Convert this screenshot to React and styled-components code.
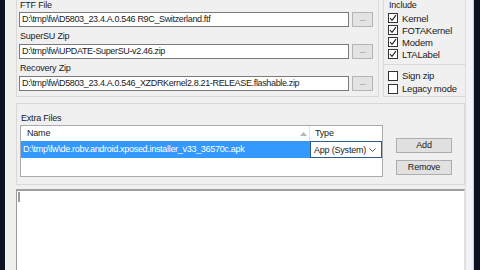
import React from 'react';
import styled, { createGlobalStyle } from 'styled-components';

const GlobalStyle = createGlobalStyle`
    html, body {
        margin: 0;
        padding: 0;
        background: #0b1322;
    }
    * {
        box-sizing: border-box;
    }
`;

const checks = [
    { label: 'Kernel', on: true },
    { label: 'FOTAKernel', on: true },
    { label: 'Modem', on: true },
    { label: 'LTALabel', on: true },
];

const options = [
    { label: 'Sign zip', on: false },
    { label: 'Legacy mode', on: false },
];

const fields = [
    { label: 'FTF File', value: 'D:\\tmp\\fw\\D5803_23.4.A.0.546 R9C_Switzerland.ftf' },
    { label: 'SuperSU Zip', value: 'D:\\tmp\\fw\\UPDATE-SuperSU-v2.46.zip' },
    { label: 'Recovery Zip', value: 'D:\\tmp\\fw\\D5803_23.4.A.0.546_XZDRKernel2.8.21-RELEASE.flashable.zip' },
];

const CheckBox = ({ on }) => (
    <Box>
        {on && (
            <svg width="8" height="8" viewBox="0 0 8 8">
                <path d="M1 4 L3 6.3 L7 1.2" fill="none" stroke="#1a1a1a" strokeWidth="1.1" />
            </svg>
        )}
    </Box>
);

const App = () => {
    return (
        <Screen>
            <GlobalStyle />
            <Window>
                <Content>
                    <TopRow>
                        <FileGroup>
                            {fields.map((f, i) => (
                                <React.Fragment key={f.label}>
                                    <Label $first={i === 0}>{f.label}</Label>
                                    <FieldRow>
                                        <TextBox>{f.value}</TextBox>
                                        <BrowseButton>...</BrowseButton>
                                    </FieldRow>
                                </React.Fragment>
                            ))}
                        </FileGroup>
                        <IncludeGroup>
                            <CheckList>
                                <Label $first>Include</Label>
                                {checks.map(c => (
                                    <CheckRow key={c.label}>
                                        <CheckBox on={c.on} />
                                        {c.label}
                                    </CheckRow>
                                ))}
                            </CheckList>
                            <CheckList $divided>
                                {options.map(c => (
                                    <CheckRow key={c.label} $tall>
                                        <CheckBox on={c.on} />
                                        {c.label}
                                    </CheckRow>
                                ))}
                            </CheckList>
                        </IncludeGroup>
                    </TopRow>

                    <ExtraGroup>
                        <ListColumn>
                            <ExtraLabel>Extra Files</ExtraLabel>
                            <ListView>
                                <HeaderRow>
                                    <HeaderCell $name>
                                        Name
                                        <svg width="7" height="4" viewBox="0 0 7 4">
                                            <path d="M0 4 L3.5 0 L7 4 Z" fill="#b4b4b4" />
                                        </svg>
                                    </HeaderCell>
                                    <HeaderCell>Type</HeaderCell>
                                </HeaderRow>
                                <ItemRow>
                                    <NameCell>D:\tmp\fw\de.robv.android.xposed.installer_v33_36570c.apk</NameCell>
                                    <ComboCell>
                                        App (System)
                                        <svg width="7" height="4" viewBox="0 0 7 4">
                                            <path d="M0.5 0.5 L3.5 3.5 L6.5 0.5" fill="none" stroke="#444" strokeWidth="0.9" />
                                        </svg>
                                    </ComboCell>
                                </ItemRow>
                            </ListView>
                        </ListColumn>
                        <ButtonColumn>
                            <ActionButton>Add</ActionButton>
                            <ActionButton>Remove</ActionButton>
                        </ButtonColumn>
                    </ExtraGroup>

                    <LogArea>
                        <Caret />
                    </LogArea>
                </Content>
                <Edge />
            </Window>
        </Screen>
    );
};

const Screen = styled.div`
    width: 480px;
    height: 270px;
    display: flex;
    overflow: hidden;
    background: #0b1322;
    font-family: "Liberation Sans", Arial, sans-serif;
    font-size: 9px;
    letter-spacing: -0.2px;
    color: #1a1a1a;
`;

const Window = styled.div`
    margin-left: 5px;
    width: 469px;
    display: flex;
    background: #f0f0f0;
`;

const Content = styled.div`
    width: 460px;
    padding-left: 11px;
    display: flex;
    flex-direction: column;
`;

const Edge = styled.div`
    flex: 1;
    border-left: 1px solid #dfdfe3;
    border-right: 1px solid #c8ccd4;
    background: #f3f3f7;
`;

const TopRow = styled.div`
    height: 97px;
    display: flex;
`;

const FileGroup = styled.div`
    width: 363px;
    padding-left: 2px;
    border: 1px solid #d9d9d9;
    border-top: none;
    display: flex;
    flex-direction: column;
`;

const Label = styled.div`
    height: 12px;
    line-height: 12px;
    margin-top: ${({ $first }) => ($first ? '-1px' : '3px')};
    margin-bottom: ${({ $first }) => ($first ? '1px' : '2px')};
    padding-left: 1px;
    white-space: nowrap;
`;

const FieldRow = styled.div`
    display: flex;
    align-items: center;
    gap: 3px;
`;

const TextBox = styled.div`
    width: 330px;
    height: 15px;
    line-height: 13px;
    padding-left: 2px;
    letter-spacing: -0.35px;
    border: 1px solid #7a7a7a;
    background: #ffffff;
    white-space: nowrap;
    overflow: hidden;
`;

const BrowseButton = styled.div`
    width: 21px;
    height: 15px;
    line-height: 11px;
    text-align: center;
    font-size: 8px;
    color: #666;
    border: 1px solid #b4b4b4;
    background: #e3e3e3;
`;

const IncludeGroup = styled.div`
    flex: 1;
    margin-left: 4px;
    border-left: 1px solid #d9d9d9;
    border-bottom: 1px solid #d9d9d9;
    display: flex;
    flex-direction: column;
`;

const CheckList = styled.div`
    padding-left: 4px;
    display: flex;
    flex-direction: column;
    ${({ $divided }) => $divided && `
        margin-top: 4px;
        padding-top: 4px;
        border-top: 1px solid #d9d9d9;
    `}
`;

const CheckRow = styled.div`
    height: ${({ $tall }) => ($tall ? '13px' : '12px')};
    display: flex;
    align-items: center;
    gap: 4px;
    font-size: 9.5px;
    white-space: nowrap;
`;

const Box = styled.div`
    width: 10px;
    height: 10px;
    border: 1px solid #333;
    background: #ffffff;
    display: flex;
    align-items: center;
    justify-content: center;
`;

const ExtraGroup = styled.div`
    margin-top: 6px;
    height: 82px;
    border: 1px solid #d9d9d9;
    padding: 8px 0 0 3px;
    display: flex;
`;

const ListColumn = styled.div`
    display: flex;
    flex-direction: column;
`;

const ExtraLabel = styled.div`
    height: 12px;
    line-height: 12px;
    margin-bottom: 1px;
    padding-left: 1px;
`;

const ListView = styled.div`
    width: 363px;
    height: 52px;
    border: 1px solid #a8abb2;
    background: #ffffff;
`;

const HeaderRow = styled.div`
    height: 15px;
    display: flex;
`;

const HeaderCell = styled.div`
    width: ${({ $name }) => ($name ? '289px' : 'auto')};
    flex: ${({ $name }) => ($name ? 'none' : '1')};
    padding-left: ${({ $name }) => ($name ? '6px' : '5px')};
    padding-right: 2px;
    line-height: 15px;
    display: flex;
    align-items: center;
    justify-content: space-between;
    border-right: ${({ $name }) => ($name ? '1px solid #e5e5e5' : 'none')};
`;

const ItemRow = styled.div`
    height: 17px;
    display: flex;
`;

const NameCell = styled.div`
    width: 289px;
    padding-left: 2px;
    line-height: 16px;
    letter-spacing: -0.3px;
    background: #3399ff;
    color: #ffffff;
    white-space: nowrap;
    overflow: hidden;
`;

const ComboCell = styled.div`
    flex: 1;
    padding: 0 5px 0 3px;
    border: 1px solid #2c5c8a;
    background: #ffffff;
    display: flex;
    align-items: center;
    justify-content: space-between;
    white-space: nowrap;
`;

const ButtonColumn = styled.div`
    margin-left: 13px;
    margin-top: 26px;
    display: flex;
    flex-direction: column;
    gap: 7px;
`;

const ActionButton = styled.div`
    width: 56px;
    height: 15px;
    line-height: 13px;
    text-align: center;
    border: 1px solid #adadad;
    background: #e1e1e1;
`;

const LogArea = styled.div`
    margin-top: 4px;
    flex: 1;
    position: relative;
    background: #ffffff;
    border-top: 2px solid #a0a0a0;
    border-left: 1px solid #9a9a9a;
    border-right: 1px solid #e2e2e2;
`;

const Caret = styled.div`
    position: absolute;
    left: 1px;
    top: 1px;
    width: 2px;
    height: 10px;
    background: #9a9a9a;
`;

export default App;
